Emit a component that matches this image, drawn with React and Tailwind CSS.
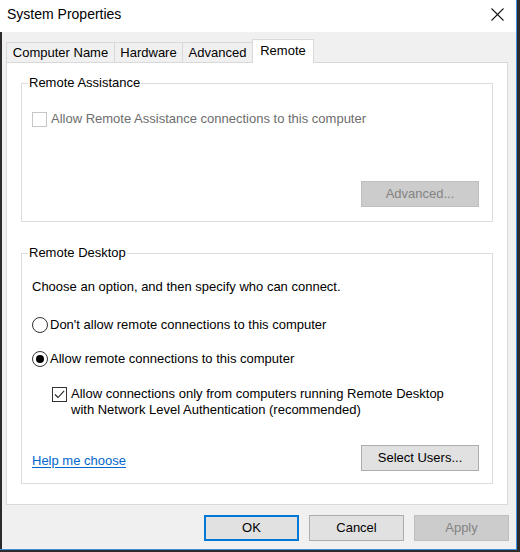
import React from "react";

function CloseIcon() {
  return (
    <svg width="13" height="13" viewBox="0 0 13 13" className="block">
      <path d="M0.5 0.5 L12.5 12.5 M12.5 0.5 L0.5 12.5" stroke="#1a1a1a" strokeWidth="1.1" fill="none" />
    </svg>
  );
}

function Radio({ checked }) {
  return (
    <svg width="16" height="16" viewBox="0 0 16 16" className="block shrink-0">
      <circle cx="8" cy="8" r="7.5" fill="#fff" stroke="#333" strokeWidth="1" />
      {checked && <circle cx="8" cy="8" r="4" fill="#000" />}
    </svg>
  );
}

function CheckBox({ checked, disabled }) {
  return (
    <svg width="15" height="15" viewBox="0 0 15 15" className="block shrink-0">
      <rect x="0.5" y="0.5" width="14" height="14" fill="#fff" stroke={disabled ? "#c6c6c6" : "#333"} strokeWidth="1" />
      {checked && <path d="M3 7.5 L6 10.5 L12.2 3.8" stroke="#222" strokeWidth="1.1" fill="none" />}
    </svg>
  );
}

function GroupBox({ title, className, children }) {
  return (
    <div className={"border border-[#dcdcdc] " + className}>
      <span className="block w-fit -mt-[9px] ml-[6px] px-[1px] bg-white leading-[16px] text-black">{title}</span>
      {children}
    </div>
  );
}

function Tab({ label, width, selected }) {
  if (selected) {
    return (
      <div className={"relative z-10 -ml-px -mb-px h-[24px] flex items-start pt-[3px] justify-center border border-b-0 border-[#d9d9d9] bg-white " + width}>
        <span className="leading-[16px]">{label}</span>
      </div>
    );
  }
  return (
    <div className={"h-[20px] flex items-center justify-center border border-b-0 border-[#d9d9d9] bg-[#f0f0f0] first:ml-0 -ml-px " + width}>
      <span className="leading-[16px]">{label}</span>
    </div>
  );
}

export default function App() {
  return (
    <div className="w-[520px] h-[552px] bg-[#2b2b2b] font-['Liberation_Sans',Arial,sans-serif] text-[13px] text-black">
      <div className="w-[517px] h-[550px] flex flex-col border-r border-b border-[#3d8ee0] bg-[#f0f0f0]">
        {/* title bar */}
        <div className="h-[32px] bg-white flex items-start justify-between pl-[7px] pr-[12px]">
          <span className="text-[14px] leading-[18px] pt-[5px]">System Properties</span>
          <div className="pt-[8px]">
            <CloseIcon />
          </div>
        </div>

        {/* dialog body */}
        <div className="flex-1 flex flex-col border-l-2 border-[#2b2b2b] pl-[4px] pt-[7px]">
          <div className="flex items-end h-[23px]">
            <Tab label="Computer Name" width="w-[109px]" />
            <Tab label="Hardware" width="w-[69px]" />
            <Tab label="Advanced" width="w-[71px]" />
            <Tab label="Remote" width="w-[62px]" selected />
          </div>

          <div className="w-[502px] h-[443px] border border-[#d9d9d9] bg-white px-[14px] pt-[20px]">
            <GroupBox title="Remote Assistance" className="h-[139px]">
              <div className="mt-[20px] ml-[10px] h-[16px] flex items-center gap-[4px] text-[#6d6d6d]">
                <CheckBox disabled />
                <span className="leading-[16px]">Allow Remote Assistance connections to this computer</span>
              </div>
              <div className="mt-[54px] mr-[13px] flex justify-end">
                <div className="w-[118px] h-[26px] flex items-center justify-center bg-[#cccccc] border border-[#bfbfbf] text-[#838383]">
                  Advanced...
                </div>
              </div>
            </GroupBox>

            <GroupBox title="Remote Desktop" className="h-[231px] mt-[31px]">
              <div className="pl-[10px] pr-[13px]">
                <p className="mt-[18px] leading-[16px]">Choose an option, and then specify who can connect.</p>
                <div className="mt-[22px] h-[16px] flex items-center gap-[2px]">
                  <Radio />
                  <span className="leading-[16px]">Don't allow remote connections to this computer</span>
                </div>
                <div className="mt-[18px] h-[16px] flex items-center gap-[2px]">
                  <Radio checked />
                  <span className="leading-[16px]">Allow remote connections to this computer</span>
                </div>
                <div className="mt-[19px] ml-[20px] flex items-start gap-[4px]">
                  <div className="pt-[1px]">
                    <CheckBox checked />
                  </div>
                  <span className="leading-[16px]">
                    Allow connections only from computers running Remote Desktop
                    <br />
                    with Network Level Authentication (recommended)
                  </span>
                </div>
                <div className="mt-[27px] h-[26px] flex items-end justify-between">
                  <span className="leading-[16px] mb-[2px] text-[#0066cc] underline underline-offset-[2px]">Help me choose</span>
                  <div className="w-[118px] h-[26px] flex items-center justify-center bg-[#e1e1e1] border border-[#adadad]">
                    Select Users...
                  </div>
                </div>
              </div>
            </GroupBox>
          </div>

          <div className="mt-[10px] pr-[7px] flex justify-end gap-[10px]">
            <div className="w-[95px] h-[26px] flex items-center justify-center bg-[#e1e1e1] border-2 border-[#0078d7]">OK</div>
            <div className="w-[95px] h-[26px] flex items-center justify-center bg-[#e1e1e1] border border-[#adadad]">Cancel</div>
            <div className="w-[95px] h-[26px] flex items-center justify-center bg-[#cccccc] border border-[#bfbfbf] text-[#838383]">Apply</div>
          </div>
        </div>
      </div>
    </div>
  );
}
